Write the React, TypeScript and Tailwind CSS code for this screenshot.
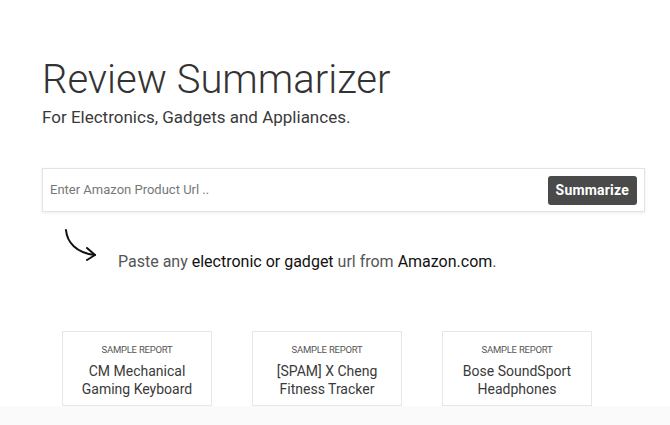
import React from 'react';

interface ISampleCardProps {
  title: string[];
}

const SampleCard = ({ title }: ISampleCardProps) => {
  return (
    <div className="w-[150px] h-[75px] border border-[#e6e6e6] bg-white flex flex-col items-center pt-[13px] cursor-pointer">
      <div className="text-[9.5px] text-[#555] tracking-tight leading-none">SAMPLE REPORT</div>
      <div className="mt-[7px] text-[14px] leading-[18px] text-[#3a3a3a] text-center">
        {title.map((line) => (
          <div key={line}>{line}</div>
        ))}
      </div>
    </div>
  );
};

const CurvedArrow = () => (
  <svg width="40" height="34" viewBox="0 0 40 34" fill="none" stroke="#111" strokeWidth="2" strokeLinecap="round" strokeLinejoin="round">
    <path d="M4 2 C5 14 14 25 33 27" />
    <path d="M25 20 L33 27 L25 32" />
  </svg>
);

export default function App() {
  const samples = [
    ['CM Mechanical', 'Gaming Keyboard'],
    ['[SPAM] X Cheng', 'Fitness Tracker'],
    ['Bose SoundSport', 'Headphones'],
  ];

  return (
    <div className="w-[670px] h-[425px] bg-white overflow-hidden" style={{ fontFamily: 'Roboto, "Liberation Sans", sans-serif' }}>
      <div className="pl-[42px] pr-[25px] pt-[55px]">
        <h1 className="text-[40px] font-light leading-[50px] text-[#333]">Review Summarizer</h1>
        <p className="text-[17px] text-[#3a3a3a] leading-[22px] mt-[1px]">For Electronics, Gadgets and Appliances.</p>

        <div className="mt-[40px] h-[44px] border border-[#e3e3e3] shadow-[0_1px_3px_rgba(0,0,0,0.08)] flex items-center pl-[7px] pr-[7px]">
          <input
            className="flex-1 outline-none text-[13px] text-[#333] placeholder:text-[#777] bg-transparent"
            placeholder="Enter Amazon Product Url .."
          />
          <button className="h-[29px] px-[8px] rounded-[3px] bg-[#4a4a4a] text-white text-[14px] font-bold tracking-[0.2px]">
            Summarize
          </button>
        </div>

        <div className="flex items-start mt-[16px] pl-[20px]">
          <CurvedArrow />
          <p className="text-[16px] text-[#555] mt-[22px] ml-[16px]">
            Paste any <span className="text-[#111]">electronic or gadget</span> url from{' '}
            <span className="text-[#111]">Amazon.com</span>.
          </p>
        </div>
      </div>

      <div className="flex gap-[40px] pl-[62px] mt-[57px]">
        {samples.map((s) => (
          <SampleCard key={s[0]} title={s} />
        ))}
      </div>
      <div className="h-[30px] bg-[#fafafa]" />
    </div>
  );
}
